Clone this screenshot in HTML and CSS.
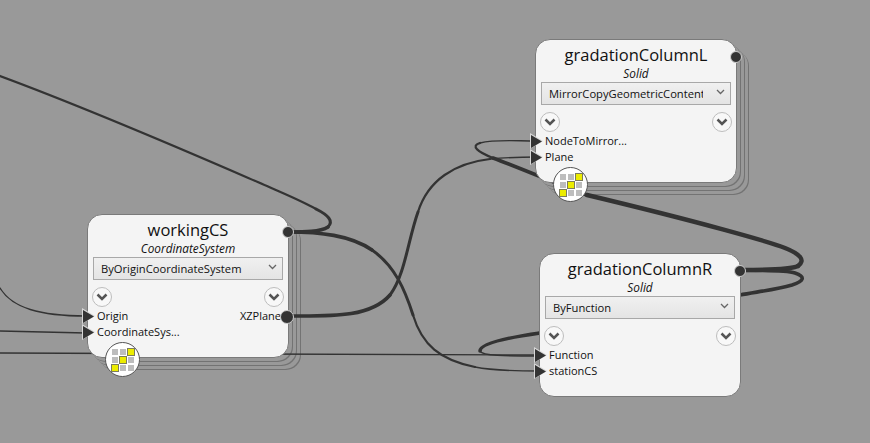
FILE: index.html
```html
<!DOCTYPE html>
<html lang="en">
  <head>
    <meta charset="utf-8" />
    <meta name="viewport" content="width=device-width, initial-scale=1" />
    <link rel="stylesheet" href="styles.css">
    <title>Node graph</title>
  </head>
  <body>
    <main class="canvas">
      <!-- replication stacks sit under the wires, the node faces above them -->
      <div class="stack stack-working"></div>
      <div class="stack stack-mirror"></div>

      <svg class="wires" width="870" height="443" viewBox="0 0 870 443">
        <!-- workingCS to the upper left -->
        <path class="w4" d="M288 232C305 232 320 232 328 227"/>
        <path class="w3" d="M328 227C334 221 328 215 316 209"/>
        <path class="w2" d="M316 209C300 200 280 192 267 186C200 157 100 113 0 76"/>
        <!-- workingCS to stationCS -->
        <path class="w4" d="M288 232C320 232 350 235 372 250"/>
        <path class="w3" d="M372 250C395 266 405 290 413 315"/>
        <path class="w2" d="M413 315C422 345 440 360 475 367"/>
        <path class="w1" d="M475 367C495 371 520 371 540 371"/>
        <!-- XZPlane to Plane -->
        <path class="w4" d="M288 316C330 316 370 318 390 295"/>
        <path class="w3" d="M390 295C405 275 408 240 418 212"/>
        <path class="w2" d="M418 212C428 180 455 163 490 159"/>
        <path class="w1" d="M490 159C510 157 525 157 538 157"/>
        <!-- gradationColumnR to NodeToMirror -->
        <path class="w5" d="M741 270C765 270 790 270 798 266"/>
        <path class="w5" d="M798 266C806 260 800 254 785 248C770 242 700 222 587 195"/>
        <path class="w4" d="M587 195C560 185 520 168 493 158"/>
        <path class="w2" d="M493 158C478 152 470 146 480 143"/>
        <path class="w1" d="M480 143C495 139 515 141 537 141"/>
        <!-- gradationColumnR to Function -->
        <path class="w4" d="M741 270C765 271 785 270 795 273C806 277 804 281 792 285C775 290 755 292 740 295L540 333"/>
        <path class="w4" d="M540 333C505 338 480 344 480 351"/>
        <path class="w1" d="M480 351C482 356 505 356 540 356"/>
        <!-- wires coming in from off screen -->
        <path class="w1" d="M0 353L540 355"/>
        <path class="w1" d="M0 288C12 308 40 316 86 316"/>
        <path class="w1" d="M0 331L86 333"/>
      </svg>

      <section class="node node-working">
        <h2 class="node-title">workingCS</h2>
        <p class="node-type">CoordinateSystem</p>
        <div class="picker">
          <span class="picker-text">ByOriginCoordinateSystem</span>
          <svg class="picker-arrow" width="9" height="6" viewBox="0 0 9 6"><path d="M1 1l3.500 3.500L8 1"/></svg>
        </div>
        <div class="expanders">
          <span class="expander"><svg width="12" height="8" viewBox="0 0 12 8"><path d="M1.500 1.500l4.500 4.500 4.500-4.500"/></svg></span>
          <span class="expander"><svg width="12" height="8" viewBox="0 0 12 8"><path d="M1.500 1.500l4.500 4.500 4.500-4.500"/></svg></span>
        </div>
        <div class="ports">
          <div class="port-row">
            <span class="port-in">Origin</span>
            <span class="port-out">XZPlane</span>
          </div>
          <div class="port-row">
            <span class="port-in">CoordinateSys...</span>
          </div>
        </div>
        <span class="out-dot out-dot-top"></span>
        <div class="lacing">
          <i></i><i></i><i class="on"></i>
          <i></i><i class="on"></i><i></i>
          <i class="on"></i><i></i><i></i>
        </div>
      </section>

      <section class="node node-mirror">
        <h2 class="node-title">gradationColumnL</h2>
        <p class="node-type">Solid</p>
        <div class="picker">
          <span class="picker-text">MirrorCopyGeometricContent</span>
          <svg class="picker-arrow" width="9" height="6" viewBox="0 0 9 6"><path d="M1 1l3.500 3.500L8 1"/></svg>
        </div>
        <div class="expanders">
          <span class="expander"><svg width="12" height="8" viewBox="0 0 12 8"><path d="M1.500 1.500l4.500 4.500 4.500-4.500"/></svg></span>
          <span class="expander"><svg width="12" height="8" viewBox="0 0 12 8"><path d="M1.500 1.500l4.500 4.500 4.500-4.500"/></svg></span>
        </div>
        <div class="ports">
          <div class="port-row"><span class="port-in">NodeToMirror...</span></div>
          <div class="port-row"><span class="port-in">Plane</span></div>
        </div>
        <span class="out-dot out-dot-top"></span>
        <div class="lacing">
          <i></i><i></i><i class="on"></i>
          <i></i><i class="on"></i><i></i>
          <i class="on"></i><i></i><i></i>
        </div>
      </section>

      <section class="node node-function">
        <h2 class="node-title">gradationColumnR</h2>
        <p class="node-type">Solid</p>
        <div class="picker">
          <span class="picker-text">ByFunction</span>
          <svg class="picker-arrow" width="9" height="6" viewBox="0 0 9 6"><path d="M1 1l3.500 3.500L8 1"/></svg>
        </div>
        <div class="expanders">
          <span class="expander"><svg width="12" height="8" viewBox="0 0 12 8"><path d="M1.500 1.500l4.500 4.500 4.500-4.500"/></svg></span>
          <span class="expander"><svg width="12" height="8" viewBox="0 0 12 8"><path d="M1.500 1.500l4.500 4.500 4.500-4.500"/></svg></span>
        </div>
        <div class="ports">
          <div class="port-row"><span class="port-in">Function</span></div>
          <div class="port-row"><span class="port-in">stationCS</span></div>
        </div>
        <span class="out-dot out-dot-top"></span>
      </section>
    </main>
  </body>
</html>
```

FILE: styles.css
```css
:root {
  --canvas: #999999;
  --wire: #333333;
  --node-face: #f4f4f4;
  --node-edge: #7a7a7a;
  --stack-line: #737373;
}

* {
  box-sizing: border-box;
}

html {
  font-family: "Open Sans", "Noto Sans", sans-serif;
  font-size: 11px;
}

body {
  margin: 0;
}

.canvas {
  background-color: var(--canvas);
  height: 443px;
  overflow: hidden;
  position: relative;
  width: 870px;
}

.wires {
  left: 0;
  position: absolute;
  top: 0;

  & path {
    fill: none;
    stroke: var(--wire);
    stroke-linecap: round;
  }

  & .w1 { stroke-width: 1.4px; }
  & .w2 { stroke-width: 2.2px; }
  & .w3 { stroke-width: 3px; }
  & .w4 { stroke-width: 3.6px; }
  & .w5 { stroke-width: 4.4px; }
}

.stack {
  background-color: var(--canvas);
  border-radius: 15px;
  height: 144px;
  position: absolute;
  width: 202px;
  box-shadow:
    3px 3px 0 0 var(--canvas),
    4px 4px 0 0 var(--stack-line),
    7px 7px 0 0 var(--canvas),
    8px 8px 0 0 var(--stack-line),
    11px 11px 0 0 var(--canvas),
    12px 12px 0 0 var(--stack-line);
}

.stack-working { left: 87px; top: 214px; }
.stack-mirror { left: 535px; top: 39px; }

.node {
  background-color: var(--node-face);
  border: 1px solid var(--node-edge);
  border-radius: 15px;
  color: #111;
  display: flex;
  flex-direction: column;
  height: 144px;
  padding: 0 5px;
  position: absolute;
  width: 202px;
}

.node-working { left: 87px; top: 214px; }
.node-mirror { left: 535px; top: 39px; }
.node-function { left: 539px; top: 253px; }

.node-title {
  font-size: 16.500px;
  font-weight: 400;
  line-height: 23px;
  margin: 3px 0 0;
  text-align: center;
}

.node-type {
  font-size: 11.800px;
  font-style: italic;
  line-height: 14px;
  margin: 0;
  text-align: center;
}

.picker {
  align-items: center;
  background-image: linear-gradient(to bottom, #f0f0f0, #e4e4e4);
  border: 1px solid #a8a8a8;
  display: flex;
  flex: none;
  font-size: 11.200px;
  height: 23px;
  margin-top: 2px;
  padding: 0 4px 0 7px;
}

.picker-text {
  flex: 1;
  overflow: hidden;
  white-space: nowrap;
}

.picker-arrow {
  flex: none;
  margin: 0 1px 3px 13px;

  & path {
    fill: none;
    stroke: #666;
    stroke-width: 1.300px;
  }
}

.expanders {
  display: flex;
  justify-content: space-between;
  margin: 7px -1px 0 -1px;
}

.expander {
  align-items: center;
  background-color: #f8f8f8;
  border: 1.500px solid #bdbdbd;
  border-radius: 50%;
  display: flex;
  height: 20px;
  justify-content: center;
  width: 20px;

  & path {
    fill: none;
    stroke: #555;
    stroke-width: 2.500px;
  }
}

.ports {
  display: flex;
  flex-direction: column;
  margin-top: 1px;
}

.port-row {
  align-items: center;
  display: flex;
  height: 16px;
  justify-content: space-between;
  line-height: 16px;
}

.port-in {
  margin-left: 4px;
  position: relative;

  /* input arrow hangs over the node edge, light copy behind makes the rim */
  &::before,
  &::after {
    clip-path: polygon(0 0, 100% 50%, 0 100%);
    content: "";
    position: absolute;
  }

  &::before {
    background-color: #d8d8d8;
    height: 16px;
    left: -15px;
    top: 0;
    width: 13px;
  }

  &::after {
    background-color: #333;
    height: 13px;
    left: -14px;
    top: 2px;
    width: 11px;
  }
}

.port-out {
  margin-right: 2px;
}

.out-dot,
.port-out::after {
  background-color: #333;
  border: 1px solid #ccc;
  border-radius: 50%;
  height: 12px;
  position: absolute;
  right: -6px;
  width: 12px;
}

.out-dot-top {
  top: 11px;
}

.port-out::after {
  content: "";
  top: 95px;
}

.lacing {
  align-content: center;
  background-color: #fff;
  border: 1.500px solid #555;
  border-radius: 50%;
  bottom: -20px;
  display: grid;
  gap: 2px;
  grid-template-columns: repeat(3, 6px);
  height: 35px;
  justify-content: center;
  left: 17px;
  position: absolute;
  width: 35px;

  & i {
    background-color: #bdbdbd;
    height: 6px;
    width: 6px;
  }

  & .on {
    background-color: #ecec00;
    box-shadow: 0 0 0 1px #7c7c5c;
  }
}
```
